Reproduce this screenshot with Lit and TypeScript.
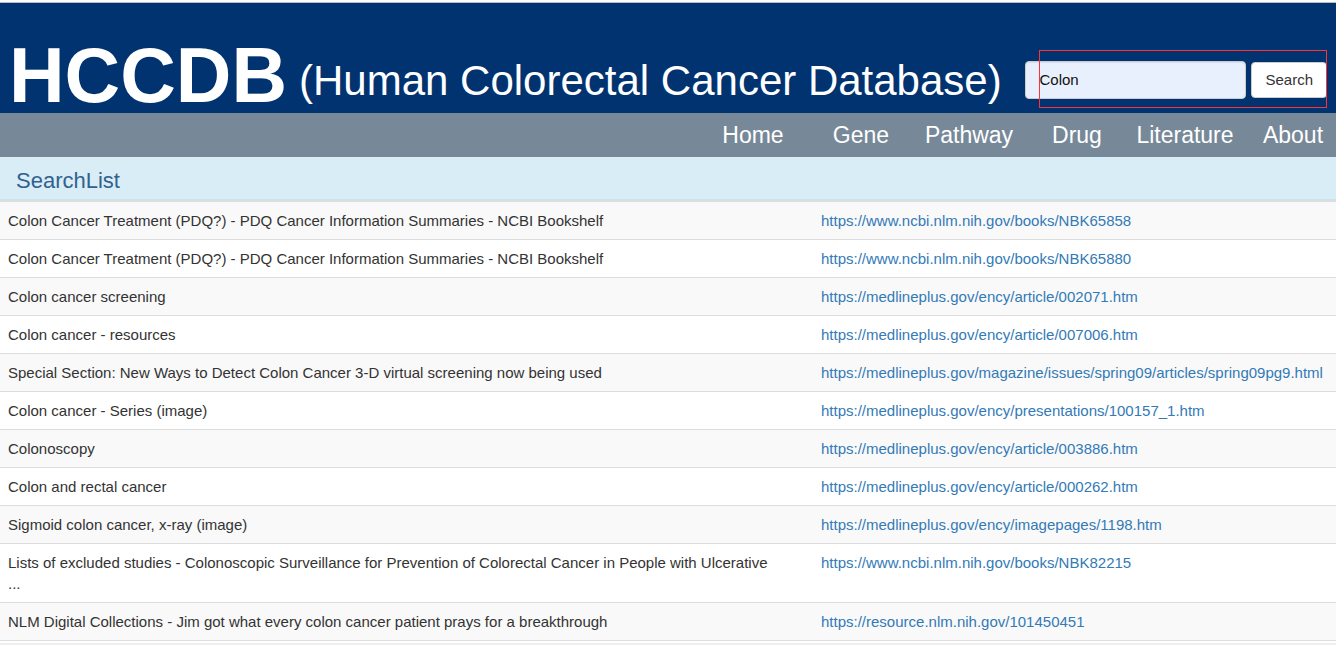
import { LitElement, html, css } from "lit";
import { customElement, state } from "lit/decorators.js";

interface Result {
  title: string;
  url: string;
}

const NAV = ["Home", "Gene", "Pathway", "Drug", "Literature", "About"];

const RESULTS: Result[] = [
  { title: "Colon Cancer Treatment (PDQ?) - PDQ Cancer Information Summaries - NCBI Bookshelf", url: "https://www.ncbi.nlm.nih.gov/books/NBK65858" },
  { title: "Colon Cancer Treatment (PDQ?) - PDQ Cancer Information Summaries - NCBI Bookshelf", url: "https://www.ncbi.nlm.nih.gov/books/NBK65880" },
  { title: "Colon cancer screening", url: "https://medlineplus.gov/ency/article/002071.htm" },
  { title: "Colon cancer - resources", url: "https://medlineplus.gov/ency/article/007006.htm" },
  { title: "Special Section: New Ways to Detect Colon Cancer 3-D virtual screening now being used", url: "https://medlineplus.gov/magazine/issues/spring09/articles/spring09pg9.html" },
  { title: "Colon cancer - Series (image)", url: "https://medlineplus.gov/ency/presentations/100157_1.htm" },
  { title: "Colonoscopy", url: "https://medlineplus.gov/ency/article/003886.htm" },
  { title: "Colon and rectal cancer", url: "https://medlineplus.gov/ency/article/000262.htm" },
  { title: "Sigmoid colon cancer, x-ray (image)", url: "https://medlineplus.gov/ency/imagepages/1198.htm" },
  { title: "Lists of excluded studies - Colonoscopic Surveillance for Prevention of Colorectal Cancer in People with Ulcerative ...", url: "https://www.ncbi.nlm.nih.gov/books/NBK82215" },
  { title: "NLM Digital Collections - Jim got what every colon cancer patient prays for a breakthrough", url: "https://resource.nlm.nih.gov/101450451" },
];

@customElement("search-box")
export class SearchBox extends LitElement {
  @state() private query = "Colon";

  static styles = css`
    :host {
      display: block;
      position: relative;
    }
    .form {
      display: flex;
      align-items: center;
      gap: 5px;
      margin: 0;
    }
    .field,
    .submit {
      box-sizing: border-box;
      font: 15px/21px "Liberation Sans", Arial, sans-serif;
      border: 1px solid #ccc;
      border-radius: 4px;
    }
    .field {
      width: 221px;
      height: 38px;
      padding: 7px 13px 9px;
      color: #111;
      background: #e8f0fe;
      box-shadow: inset 0 1px 1px rgba(0, 0, 0, 0.075);
    }
    .submit {
      height: 36px;
      padding: 5px 13px 7px;
      color: #333;
      background: #fff;
      cursor: pointer;
    }
    .outline {
      position: absolute;
      inset: -11px 0 -9px 14px;
      border: 1px solid #f33;
      pointer-events: none;
    }
  `;

  render() {
    return html`
      <form class="form" role="search" @submit=${(e: Event) => e.preventDefault()}>
        <input
          class="field"
          type="text"
          aria-label="Search"
          .value=${this.query}
          @input=${(e: Event) => (this.query = (e.target as HTMLInputElement).value)}
        />
        <button class="submit" type="submit">Search</button>
      </form>
      <div class="outline"></div>
    `;
  }
}

@customElement("app-root")
export class AppRoot extends LitElement {
  static styles = css`
    :host {
      display: block;
      overflow-x: hidden;
      background: #fff;
      color: #333;
      font: 15px/21px "Liberation Sans", Arial, sans-serif;
    }
    .banner {
      display: flex;
      justify-content: space-between;
      align-items: flex-end;
      box-sizing: border-box;
      height: 111px;
      margin-top: 2px;
      padding: 0 9px;
      border-top: 1px solid #bbb;
      background: #003370;
    }
    .brand {
      display: flex;
      align-items: flex-end;
      gap: 12px;
      margin: 0;
      color: #fff;
      font-size: 42px;
      font-weight: 400;
      line-height: 65px;
      white-space: nowrap;
    }
    .name {
      font-size: 77px;
      font-weight: 700;
      line-height: 76px;
    }
    .search {
      margin-bottom: 14px;
    }
    .nav {
      display: flex;
      justify-content: flex-end;
      margin-right: -11px;
      background: #778998;
    }
    .link {
      width: 108px;
      color: #fff;
      font-size: 23px;
      line-height: 44px;
      text-align: center;
      text-decoration: none;
    }
    .heading {
      margin: 0;
      padding: 12px 16px 6px;
      border-bottom: 1px solid #bce8f1;
      background: #d9edf7;
      color: #31618f;
      font-size: 22px;
      font-weight: 400;
      line-height: 24px;
    }
    .results {
      width: 100%;
      table-layout: fixed;
      border-collapse: separate;
      border-spacing: 0;
      border-top: 2px solid #ddd;
    }
    .url-col {
      width: 523px;
    }
    .cell {
      padding: 8px;
      border-bottom: 1px solid #ddd;
      vertical-align: top;
      text-align: left;
    }
    .title {
      padding-right: 40px;
    }
    .row:nth-child(odd) {
      background: #f9f9f9;
    }
    .url {
      color: #337ab7;
      text-decoration: none;
      white-space: nowrap;
    }
    .foot {
      height: 2px;
      margin-top: 2px;
      background: #eee;
    }
  `;

  render() {
    return html`
      <header>
        <div class="banner">
          <h1 class="brand">
            <span class="name">HCCDB</span>
            <span>(Human Colorectal Cancer Database)</span>
          </h1>
          <search-box class="search"></search-box>
        </div>
        <nav class="nav">${NAV.map((n) => html`<a class="link" href="#">${n}</a>`)}</nav>
      </header>
      <main>
        <h2 class="heading">SearchList</h2>
        <table class="results">
          <colgroup>
            <col />
            <col class="url-col" />
          </colgroup>
          <tbody>
            ${RESULTS.map(
              (r) => html`<tr class="row">
                <td class="cell title">${r.title}</td>
                <td class="cell"><a class="url" href=${r.url}>${r.url}</a></td>
              </tr>`
            )}
          </tbody>
        </table>
      </main>
      <div class="foot"></div>
    `;
  }
}
